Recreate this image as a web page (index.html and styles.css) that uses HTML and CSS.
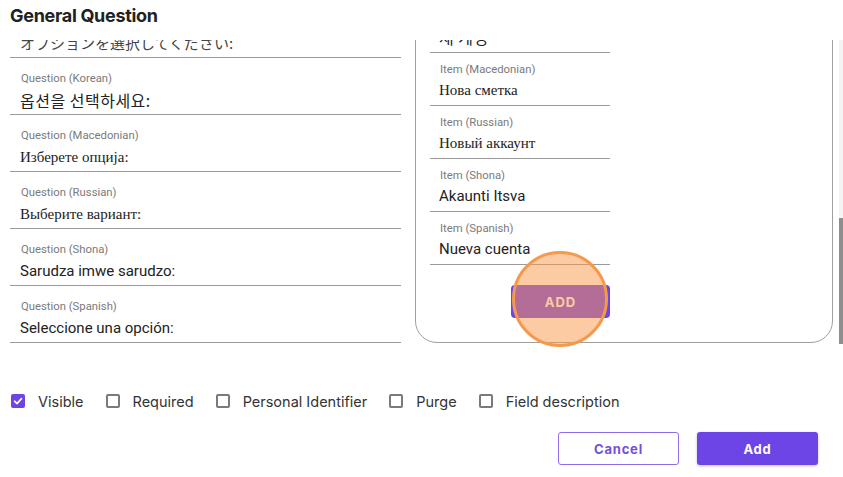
FILE: index.html
```html
<!DOCTYPE html>
<html lang="en">
  <head>
    <meta charset="utf-8" />
    <link rel="stylesheet" href="styles.css">
  </head>
  <body>

<div class="dialog">
  <h2 class="title">General Question</h2>

  <div class="scroller" id="scroller">
    <div class="columns">

      <div class="questions">
        <div class="field"><div class="label">Question (English)</div><div class="value">Select an option:</div></div>
        <div class="field"><div class="label">Question (Arabic)</div><div class="value">اختر خيارًا:</div></div>
        <div class="field"><div class="label">Question (Chinese)</div><div class="value cjk-sc">请选择一个选项:</div></div>
        <div class="field"><div class="label">Question (French)</div><div class="value">Sélectionnez une option :</div></div>
        <div class="field"><div class="label">Question (German)</div><div class="value">Wählen Sie eine Option:</div></div>
        <div class="field"><div class="label">Question (Hindi)</div><div class="value">एक विकल्प चुनें:</div></div>
        <div class="field"><div class="label">Question (Italian)</div><div class="value">Seleziona un'opzione:</div></div>
        <div class="field"><div class="label">Question (Japanese)</div><div class="value cjk-jp">オプションを選択してください:</div></div>
        <div class="field"><div class="label">Question (Korean)</div><div class="value cjk-kr">옵션을 선택하세요:</div></div>
        <div class="field"><div class="label">Question (Macedonian)</div><div class="value serif">Изберете опција:</div></div>
        <div class="field"><div class="label">Question (Russian)</div><div class="value serif">Выберите вариант:</div></div>
        <div class="field"><div class="label">Question (Shona)</div><div class="value">Sarudza imwe sarudzo:</div></div>
        <div class="field"><div class="label">Question (Spanish)</div><div class="value">Seleccione una opción:</div></div>
      </div>

      <div class="items-box">
        <div class="items">
          <div class="item"><div class="label">Item (English)</div><div class="value">New Account</div></div>
          <div class="item"><div class="label">Item (French)</div><div class="value">Nouveau compte</div></div>
          <div class="item"><div class="label">Item (German)</div><div class="value">Neues Konto</div></div>
          <div class="item"><div class="label">Item (Italian)</div><div class="value">Nuovo account</div></div>
          <div class="item"><div class="label">Item (Japanese)</div><div class="value cjk-jp">新しいアカウント</div></div>
          <div class="item"><div class="label">Item (Korean)</div><div class="value cjk-kr">새 계정</div></div>
          <div class="item"><div class="label">Item (Macedonian)</div><div class="value serif">Нова сметка</div></div>
          <div class="item"><div class="label">Item (Russian)</div><div class="value serif">Новый аккаунт</div></div>
          <div class="item"><div class="label">Item (Shona)</div><div class="value">Akaunti Itsva</div></div>
          <div class="item"><div class="label">Item (Spanish)</div><div class="value">Nueva cuenta</div></div>
        </div>
        <div class="add-row">
          <button class="add-item">ADD</button>
        </div>
      </div>

    </div>
  </div>

  <!-- scrollbar of the list (headless hides the native one) -->
  <div class="scroll-track"><div class="scroll-thumb"></div></div>

  <div class="options">
    <label class="option"><span class="box checked"><svg width="14" height="14" viewBox="0 0 14 14"><polyline points="3.5,7.2 6,9.6 10.5,4.6" fill="none" stroke="#fff" stroke-width="1.6" stroke-linecap="round" stroke-linejoin="round"/></svg></span>Visible</label>
    <label class="option"><span class="box"></span>Required</label>
    <label class="option"><span class="box"></span>Personal Identifier</label>
    <label class="option"><span class="box"></span>Purge</label>
    <label class="option"><span class="box"></span>Field description</label>
  </div>

  <div class="actions">
    <button class="btn btn-outline">Cancel</button>
    <button class="btn btn-primary">Add</button>
  </div>

  <!-- tap highlight over the ADD button -->
  <div class="tap-marker"></div>
</div>

<script>
var scroller = document.getElementById('scroller');
scroller.scrollTop = scroller.scrollHeight;
</script>

  </body>
</html>
```

FILE: styles.css
```css
html{
	background-color: #fff;
}

body{
	margin: 0;
	font-family: "Inter", "Noto Sans", sans-serif;
	color: #222;
}

.dialog{
	position: relative;
	height: 477px;
}

.title{
	margin: 0;
	height: 40px;
	box-sizing: border-box;
	padding: 4px 0 0 10px;
	font-size: 18px;
	line-height: 24px;
	font-weight: 700;
	color: #222;
	letter-spacing: -0.3px;
}

.scroller{
	margin-left: 10px;
	height: 304px;
	overflow-y: scroll;
}

.scroller::-webkit-scrollbar{
	width: 0;
}

.scroll-track{
	position: absolute;
	right: 0;
	top: 40px;
	width: 4px;
	height: 304px;
	background-color: #f4f4f4;
	display: flex;
	flex-direction: column;
	justify-content: flex-end;
}

.scroll-thumb{
	height: 126px;
	background-color: #8e8e8e;
}

.columns{
	display: grid;
	grid-template-columns: 391px 418px;
	column-gap: 14px;
	padding-bottom: 1px;
}

.label{
	font-family: "Roboto", sans-serif;
	font-size: 11.3px;
	line-height: 14px;
	color: #7a7a7a;
	padding-left: 1px;
}

.value{
	font-family: "Roboto", sans-serif;
	font-size: 15px;
	line-height: 20px;
	color: #222;
	white-space: nowrap;
}

.value.serif{
	font-family: "Liberation Serif", serif;
	font-size: 15px;
}

.value.cjk-jp{
	font-family: "Noto Sans CJK JP", sans-serif;
	color: #444;
}

.value.cjk-kr{
	font-family: "Noto Sans CJK KR", sans-serif;
	font-size: 16px;
	letter-spacing: 0.5px;
}

.value.cjk-sc{
	font-family: "Noto Sans CJK SC", sans-serif;
}

.field{
	padding: 14px 10px 4px;
	border-bottom: 1px solid #9a9a9a;
}

.field .value{
	margin-top: 4px;
}

.items-box{
	display: flex;
	flex-direction: column;
	justify-content: flex-end;
	border: 1px solid #a0a0a0;
	border-radius: 22px;
	padding: 0 0 24px 14px;
}

.items{
	width: 180px;
}

.item{
	padding: 10px 9px 5px;
	border-bottom: 1px solid #9a9a9a;
}

.item .value{
	margin-top: 3px;
	padding-top: 1px;
	line-height: 19px;
}

.add-row{
	width: 180px;
	display: flex;
	justify-content: flex-end;
	margin-top: 20px;
}

.add-item{
	width: 99px;
	height: 33px;
	border: none;
	border-radius: 4px;
	background-color: #6d44e5;
	color: #fff;
	font-family: "Inter", sans-serif;
	font-weight: 700;
	font-size: 13px;
	letter-spacing: 1px;
}

.options{
	display: flex;
	align-items: center;
	gap: 22px;
	margin-top: 47px;
	padding-left: 11px;
	height: 20px;
	font-size: 14.5px;
	color: #333;
}

.option{
	display: flex;
	align-items: center;
	gap: 13px;
}

.box{
	width: 14px;
	height: 14px;
	box-sizing: border-box;
	border: 2px solid #7a7a7a;
	border-radius: 2px;
	display: flex;
}

.box.checked{
	border: none;
	background-color: #6d44e5;
}

.actions{
	display: flex;
	justify-content: flex-end;
	gap: 18px;
	margin-top: 21px;
	padding-right: 25px;
}

.btn{
	width: 121px;
	height: 33px;
	border-radius: 3px;
	font-family: "Inter", sans-serif;
	font-weight: 700;
	font-size: 13px;
	letter-spacing: 0.8px;
}

.btn-outline{
	background-color: #fff;
	border: 1px solid #8e6cec;
	color: #7150dc;
}

.btn-primary{
	background-color: #6d44e5;
	border: none;
	color: #fff;
	box-shadow: 0 1px 3px rgba(0,0,0,0.25);
}

.tap-marker{
	position: absolute;
	left: 512px;
	top: 251px;
	width: 96px;
	height: 96px;
	box-sizing: border-box;
	border: 3px solid #f59a4c;
	border-radius: 50%;
	background-color: rgba(249, 150, 72, 0.5);
}
```
